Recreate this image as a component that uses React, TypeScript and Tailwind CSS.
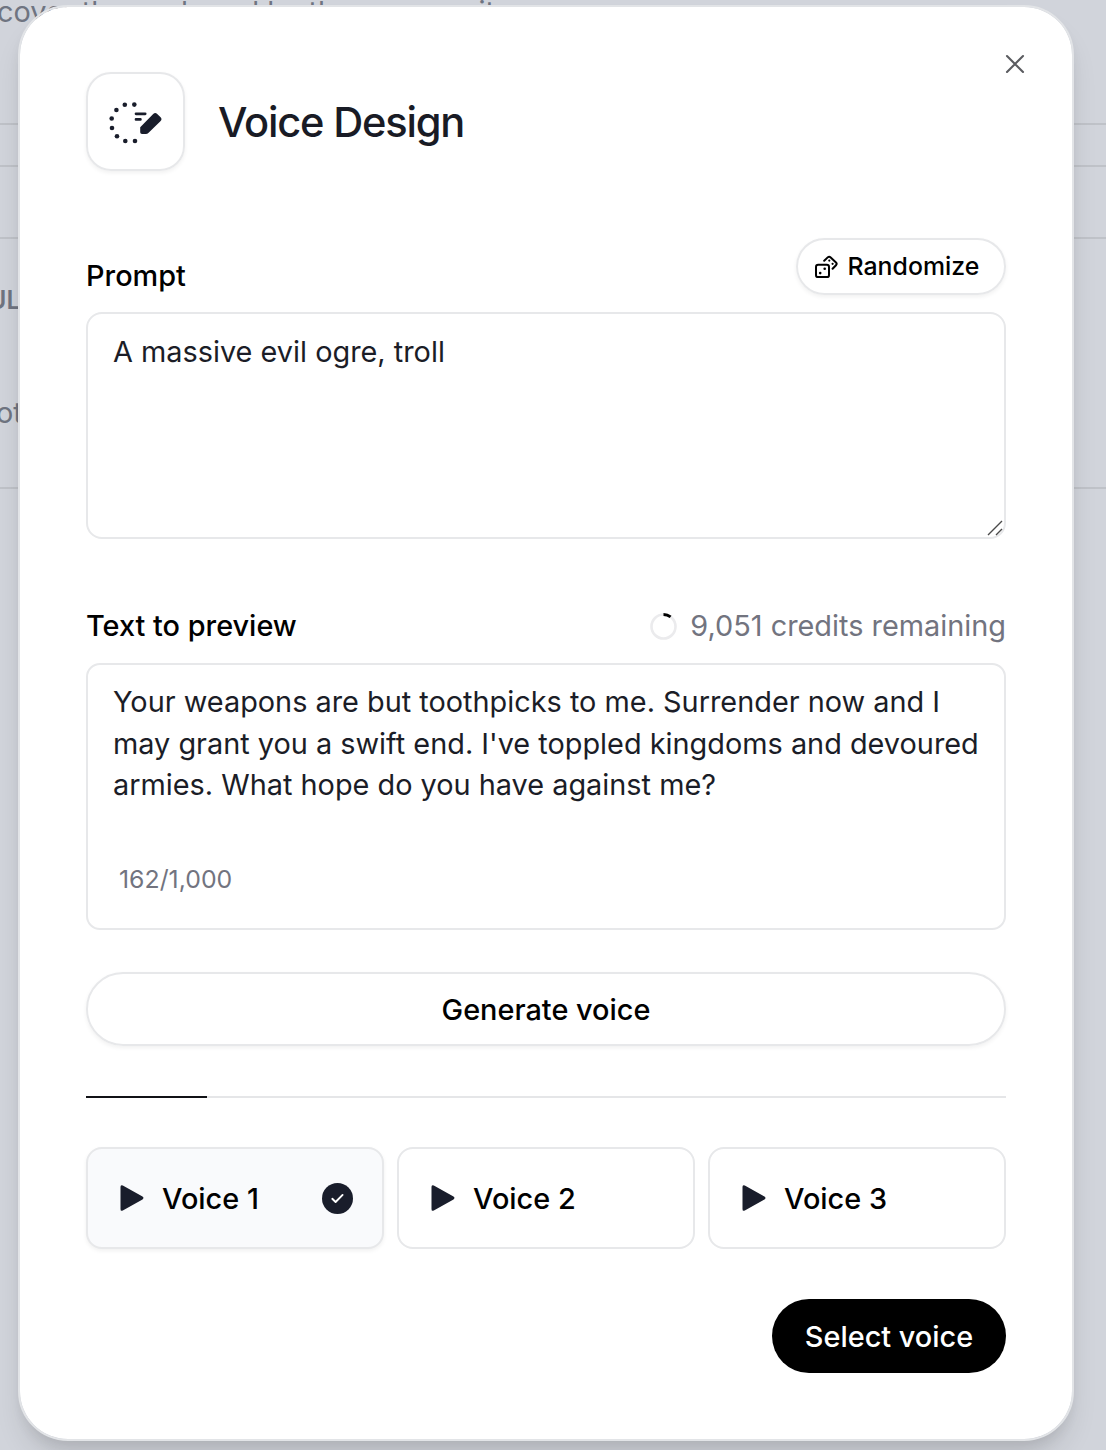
import React from "react";

function VoiceDesignIcon() {
  const dots = [
    [124.8, 104.8], [134.3, 104.6], [116.4, 110], [111.7, 118.5], [112, 128],
    [117, 136.2], [125.3, 141], [135, 141],
  ];
  return (
    <svg width="64" height="64" viewBox="104 90 64 64" fill="#191d2b">
      {dots.map(([x, y]) => (
        <circle key={`${x}-${y}`} cx={x} cy={y} r="2.3" />
      ))}
      <path d="M136 113.8H145.2M136 119.4H140.4" stroke="#191d2b" strokeWidth="2.7" strokeLinecap="round" />
      <path d="M140.2 127.2 153.2 114Q155.2 112 157.2 113.9L160.6 117.2Q162.5 119.2 160.4 121.2L148.6 132.8Q147.4 134 145.8 134H142Q140.2 134 140.2 132.2Z" />
    </svg>
  );
}

function DiceIcon() {
  return (
    <svg width="24" height="24" viewBox="814 255 24 24" fill="none" stroke="#000" strokeWidth="2" strokeLinecap="round" strokeLinejoin="round">
      <rect x="816" y="264.7" width="13" height="12.4" rx="2.2" />
      <path d="M824.2 260.8 827.7 257.4Q829.2 256 830.7 257.4L836 262.5Q837.3 263.8 836 265.2L832.6 268.8" />
      <g fill="#000" stroke="none">
        <circle cx="820.2" cy="273.1" r="1.3" />
        <circle cx="824.7" cy="268.8" r="1.3" />
        <circle cx="829.3" cy="260.6" r="1.1" />
        <circle cx="832.6" cy="263.8" r="1.1" />
      </g>
    </svg>
  );
}

function PlayIcon() {
  return (
    <svg width="26" height="28" viewBox="0 0 26 28" className="shrink-0" fill="#191d2b">
      <path d="M1.5 3Q1.5 .2 3.8 1.6L23.5 12.6Q25.5 14 23.5 15.4L3.8 26.4Q1.5 27.8 1.5 25Z" />
    </svg>
  );
}

function VoiceCard({ name, selected = false }: { name: string; selected?: boolean }) {
  return (
    <div className={`flex h-[102px] items-center rounded-[16px] border-2 border-[#e7e8ea] pr-[29px] pl-[31px] ${selected ? "bg-[#f9fafc] shadow-[0_2px_4px_rgba(0,0,0,0.06)]" : "bg-white"}`}>
      <PlayIcon />
      <span className="mt-[2px] ml-[17px] text-[28.87px] leading-[42px] font-medium">{name}</span>
      {selected && (
        <svg className="ml-auto" width="31" height="31" viewBox="0 0 31 31" fill="none">
          <circle cx="15.5" cy="15.5" r="15.5" fill="#191d2b" />
          <path d="M10.3 15.8 13.6 19 20.6 11.9" stroke="#fff" strokeWidth="1.9" strokeLinecap="round" strokeLinejoin="round" />
        </svg>
      )}
    </div>
  );
}

function Backdrop() {
  return (
    <div className="absolute inset-0 flex flex-col overflow-hidden whitespace-nowrap bg-[#d1d4db] text-[28.87px] leading-[42px] text-[#6f7481]">
      <div className="h-[123px] shrink-0">
        <p className="-mt-[9px] -ml-[3px]">cover those shared by the community</p>
      </div>
      <div className="h-[42px] shrink-0 border-t-2 border-[#bfc2c8]" />
      <div className="h-[72px] shrink-0 border-t-2 border-[#bfc2c8]" />
      <div className="h-[250px] shrink-0 border-t-2 border-[#bfc2c8]">
        <p className="mt-[40px] -ml-[12px] text-[25px] font-semibold">UL</p>
        <p className="mt-[71px] -ml-[4px]">ot</p>
      </div>
      <div className="grow border-t-2 border-[#bfc2c8]" />
    </div>
  );
}

export default function App() {
  return (
    <div className="relative h-[1450px] w-[1106px] overflow-hidden font-['Inter',sans-serif] text-black">
      <Backdrop />
      <main className="relative mt-[5px] ml-[18px] flex h-[1436px] w-[1056px] flex-col rounded-[50px] border-2 border-[#e2e4e7] bg-white bg-clip-padding px-[66px] shadow-[0_20px_30px_-6px_rgba(0,0,0,0.12),0_8px_14px_-4px_rgba(0,0,0,0.08)]">
        <button aria-label="Close" className="absolute top-[47px] right-[47.5px]">
          <svg width="20" height="20" viewBox="0 0 20 20" stroke="#5b5c60" strokeWidth="2.1" strokeLinecap="round">
            <path d="M2 2 18 18M18 2 2 18" />
          </svg>
        </button>

        <header className="mt-[65px] flex items-center">
          <div className="flex size-[99px] items-center justify-center rounded-[25px] border-2 border-[#e7e8ea] shadow-[0_2px_4px_rgba(0,0,0,0.06)]">
            <VoiceDesignIcon />
          </div>
          <h1 className="ml-[33px] text-[41.6px] leading-[50px] font-medium tracking-[-1.2px] text-[#191b25]">Voice Design</h1>
        </header>

        <div className="mt-[67px] flex h-[57px] items-start justify-between">
          <label className="mt-[17px] text-[28.87px] leading-[42px] font-medium">Prompt</label>
          <button className="flex h-[57px] w-[210px] items-center rounded-full border-2 border-[#e7e8ea] pl-[16px] text-[24.85px] font-medium shadow-[0_2px_4px_rgba(0,0,0,0.06)]">
            <DiceIcon />
            <span className="ml-[9.5px]">Randomize</span>
          </button>
        </div>

        <div className="relative mt-[17px] h-[227px] shrink-0 rounded-[16px] border-2 border-[#e7e8ea] px-[25px] pt-[17px] text-[28.87px] leading-[41.6px] text-[#1b1d27]">
          A massive evil ogre, troll
          <svg className="absolute right-[1px] bottom-[1px]" width="16" height="16" viewBox="0 0 16 16" stroke="#4a4a4a" strokeWidth="1.4">
            <path d="M1 15 15 1M9 15 15 9" />
          </svg>
        </div>

        <div className="mt-[66px] flex items-center justify-between text-[28.87px] leading-[42px]">
          <label className="font-medium">Text to preview</label>
          <div className="flex items-center text-[#72747f]">
            <svg className="mr-[13px]" width="27" height="27" viewBox="0 0 27 27" fill="none" strokeWidth="2.6">
              <circle cx="13.5" cy="13.5" r="12" stroke="#ebebed" />
              <path d="M13.5 1.5A12 12 0 0 1 20.6 3.9" stroke="#000" strokeWidth="3" />
            </svg>
            <span>9,051 credits remaining</span>
          </div>
        </div>

        <div className="mt-[16px] flex h-[267px] shrink-0 flex-col rounded-[14px] border-2 border-[#e7e8ea] px-[25px] pt-[16px] text-[28.87px] leading-[41.6px] whitespace-nowrap text-[#1b1d27]">
          <p>Your weapons are but toothpicks to me. Surrender now and I</p>
          <p>may grant you a swift end. I've toppled kingdoms and devoured</p>
          <p>armies. What hope do you have against me?</p>
          <p className="mt-[57px] ml-[6px] text-[24.85px] leading-[33px] text-[#72747f]">162/1,000</p>
        </div>

        <button className="mt-[42px] h-[74px] shrink-0 rounded-full border-2 border-[#e7e8ea] pt-[2px] text-[28.87px] font-medium shadow-[0_2px_4px_rgba(0,0,0,0.06)]">Generate voice</button>

        <div className="mt-[50px] h-[2px] shrink-0 bg-[#e5e6e8]">
          <div className="h-full w-[121px] bg-[#111216]" />
        </div>

        <div className="mt-[49px] grid grid-cols-3 gap-[13px]">
          <VoiceCard name="Voice 1" selected />
          <VoiceCard name="Voice 2" />
          <VoiceCard name="Voice 3" />
        </div>

        <button className="mt-[50px] h-[74px] w-[234px] self-end rounded-full bg-black pt-[2px] text-[28.87px] font-medium text-white">Select voice</button>
      </main>
    </div>
  );
}
